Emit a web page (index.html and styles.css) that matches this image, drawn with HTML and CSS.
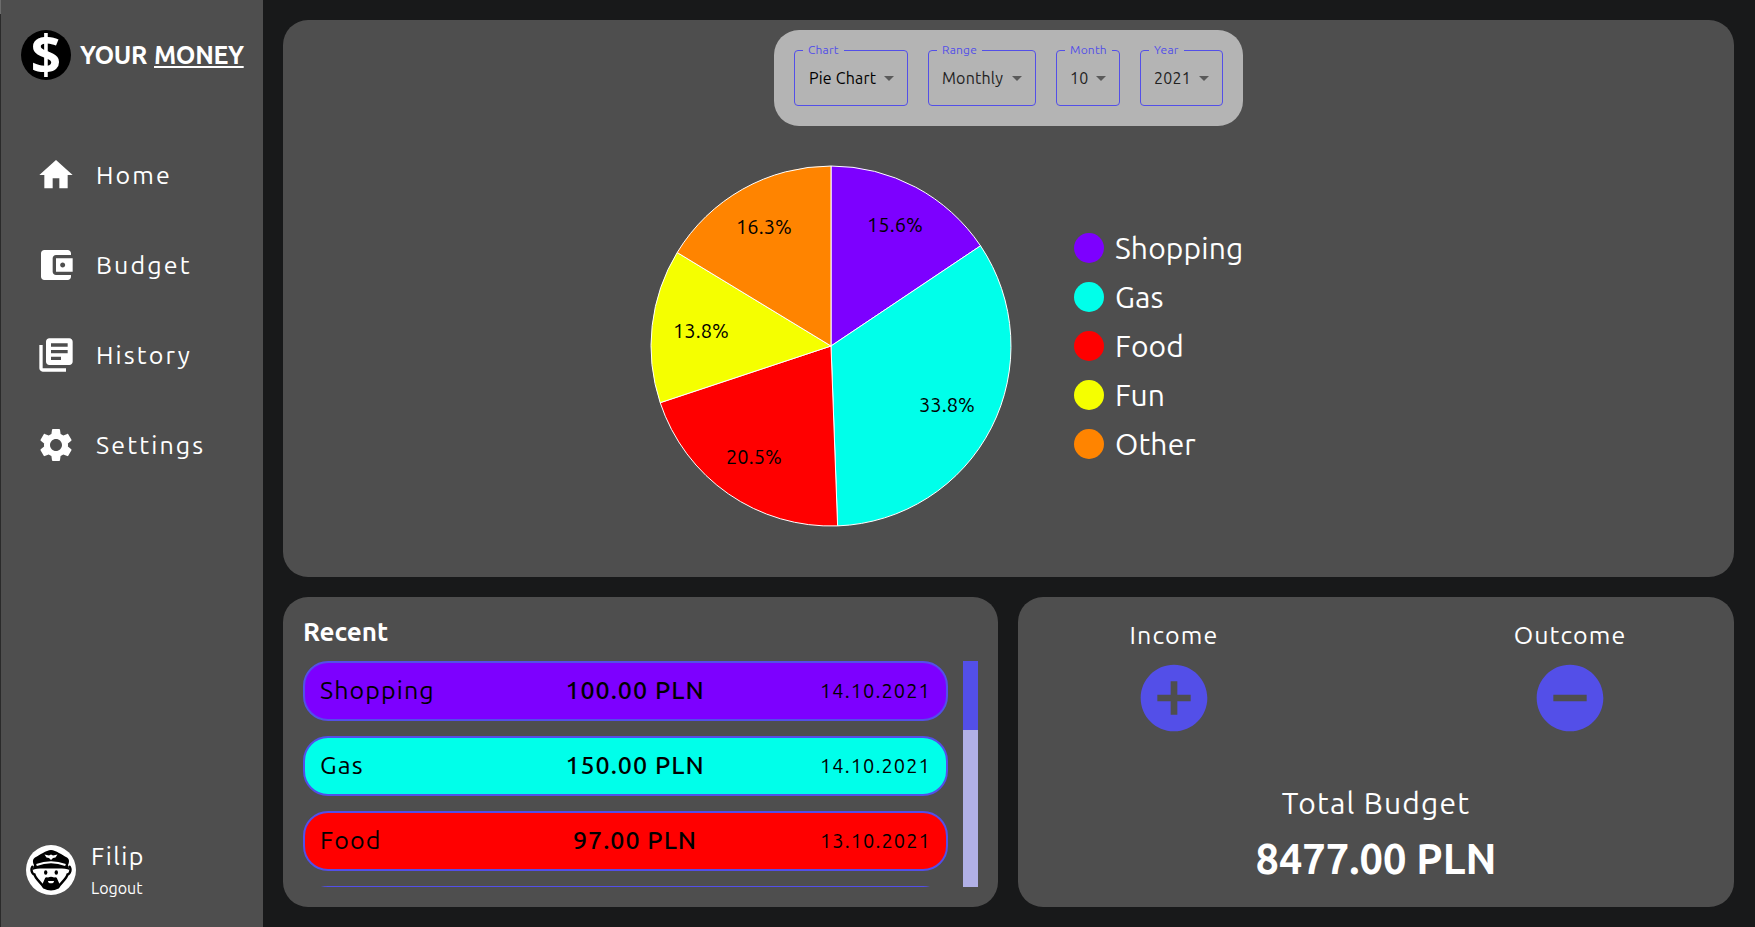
FILE: index.html
```
<!DOCTYPE html>
<html lang="en">
<head>
<meta charset="utf-8">
<title>Your Money</title>
<link rel="stylesheet" href="styles.css">
</head>
<body>
<div class="app">
  <aside class="sidebar">
    <header class="brand">
      <svg class="brand-logo" viewBox="0 0 50 50"><circle cx="25" cy="25" r="25"/><text x="25" y="43.500" text-anchor="middle">$</text></svg>
      <h1 class="brand-name">YOUR <span class="brand-underline">MONEY</span></h1>
    </header>
    <nav class="nav">
      <a class="nav-item"><svg class="nav-icon" viewBox="0 0 24 24"><path d="M10 20v-6h4v6h5v-8h3L12 3 2 12h3v8z"/></svg><span>Home</span></a>
      <a class="nav-item"><svg class="nav-icon" viewBox="0 0 24 24"><path d="M21 18v1c0 1.1-.9 2-2 2H5c-1.11 0-2-.9-2-2V5c0-1.1.89-2 2-2h14c1.1 0 2 .9 2 2v1h-9c-1.11 0-2 .9-2 2v8c0 1.1.89 2 2 2h9zm-9-2h10V8H12v8zm4-2.5c-.83 0-1.5-.67-1.5-1.5s.67-1.5 1.5-1.5 1.5.67 1.5 1.5-.67 1.5-1.5 1.5z"/></svg><span>Budget</span></a>
      <a class="nav-item"><svg class="nav-icon" viewBox="0 0 24 24"><path d="M4 6H2v14c0 1.1.9 2 2 2h14v-2H4V6zm16-4H8c-1.1 0-2 .9-2 2v12c0 1.1.9 2 2 2h12c1.1 0 2-.9 2-2V4c0-1.1-.9-2-2-2zm-1 9H9V9h10v2zm-4 4H9v-2h6v2zm4-8H9V5h10v2z"/></svg><span>History</span></a>
      <a class="nav-item"><svg class="nav-icon" viewBox="0 0 24 24"><path d="M19.14 12.94c.04-.3.06-.61.06-.94 0-.32-.02-.64-.07-.94l2.03-1.58c.18-.14.23-.41.12-.61l-1.92-3.32c-.12-.22-.37-.29-.59-.22l-2.39.96c-.5-.38-1.03-.7-1.62-.94l-.36-2.54c-.04-.24-.24-.41-.48-.41h-3.84c-.24 0-.43.17-.47.41l-.36 2.54c-.59.24-1.13.57-1.62.94l-2.39-.96c-.22-.08-.47 0-.59.22L2.74 8.87c-.12.21-.08.47.12.61l2.03 1.58c-.05.3-.09.63-.09.94s.02.64.07.94l-2.03 1.58c-.18.14-.23.41-.12.61l1.92 3.32c.12.22.37.29.59.22l2.39-.96c.5.38 1.03.7 1.62.94l.36 2.54c.05.24.24.41.48.41h3.84c.24 0 .44-.17.47-.41l.36-2.54c.59-.24 1.13-.56 1.62-.94l2.39.96c.22.08.47 0 .59-.22l1.92-3.32c.12-.22.07-.47-.12-.61l-2.01-1.58zM12 15.6c-1.98 0-3.6-1.62-3.6-3.6s1.62-3.6 3.6-3.6 3.6 1.62 3.6 3.6-1.62 3.6-3.6 3.6z"/></svg><span>Settings</span></a>
    </nav>
    <footer class="user">
      <svg class="avatar" viewBox="0 0 50 50">
        <circle cx="25" cy="25" r="25" fill="#fff"/>
        <path d="M7 21C4 24 6 29 8.500 29.500C9.500 34 14.500 37 18 42.500Q25 46 32 42.500C35.500 37 40.500 34 41.500 29.500C44 29 46 24 43 21" fill="#fff" stroke="#000" stroke-width="2.400"/>
        <path d="M25 5C20 5.200 14 10 9 12.500C6.500 14 6.500 17 8 20L6.500 25C10 23 17 23.500 25 23.500S40 23 43.500 25L42 20C43.500 17 43.500 14 41 12.500C36 10 30 5.200 25 5Z"/>
        <path d="M10.500 20Q25 14.500 39.500 20" fill="none" stroke="#fff" stroke-width="2"/>
        <path d="M18.500 9.500L23 10.500L25 9.500L27 10.500L31.500 9.500L29.500 12.500L27 13L25 15L23 13L20.500 12.500Z" fill="#fff"/>
        <ellipse cx="19.700" cy="27.500" rx="1.700" ry="2.300"/><ellipse cx="30.300" cy="27.500" rx="1.700" ry="2.300"/>
        <path d="M18.500 34.500Q19 31.500 22 32.500Q25 31 28 32.500Q31 31.500 31.500 34.500L33.500 39L31 43Q25 46.500 19 43L16.500 39Z"/>
        <path d="M22 36H28Q28 38.300 25 38.300T22 36Z" fill="#fff"/>
      </svg>
      <div class="user-text"><span class="user-name">Filip</span><a class="logout">Logout</a></div>
    </footer>
  </aside>

  <main class="main">
    <section class="card chart-card">
      <div class="filters">
        <div class="field field-chart"><span class="field-label">Chart</span><span>Pie Chart</span><svg class="arrow" viewBox="0 0 24 24"><path d="M7 10l5 5 5-5z"/></svg></div>
        <div class="field field-range"><span class="field-label">Range</span><span class="muted">Monthly</span><svg class="arrow" viewBox="0 0 24 24"><path d="M7 10l5 5 5-5z"/></svg></div>
        <div class="field field-month"><span class="field-label">Month</span><span class="muted">10</span><svg class="arrow" viewBox="0 0 24 24"><path d="M7 10l5 5 5-5z"/></svg></div>
        <div class="field field-year"><span class="field-label">Year</span><span class="muted">2021</span><svg class="arrow" viewBox="0 0 24 24"><path d="M7 10l5 5 5-5z"/></svg></div>
      </div>
      <div class="chart">
        <svg class="pie" viewBox="0 0 362 362">
          <g stroke="#fff" stroke-width="1" stroke-linejoin="round">
            <path fill="#7d00ff" d="M181 181V1A180 180 0 0 1 330.500 80.800Z"/>
            <path fill="#00ffea" d="M181 181L330.500 80.800A180 180 0 0 1 187.600 360.900Z"/>
            <path fill="#ff0000" d="M181 181L187.600 360.900A180 180 0 0 1 10.200 237.700Z"/>
            <path fill="#f5ff00" d="M181 181L10.200 237.700A180 180 0 0 1 27.200 87.500Z"/>
            <path fill="#ff8400" d="M181 181L27.200 87.500A180 180 0 0 1 181 1Z"/>
          </g>
          <g class="pie-labels">
            <text x="245" y="67">15.6%</text>
            <text x="297" y="247">33.8%</text>
            <text x="104" y="299">20.5%</text>
            <text x="51" y="173">13.8%</text>
            <text x="114" y="69">16.3%</text>
          </g>
        </svg>
        <ul class="legend">
          <li class="legend-item"><i class="dot shopping"></i>Shopping</li>
          <li class="legend-item"><i class="dot gas"></i>Gas</li>
          <li class="legend-item"><i class="dot food"></i>Food</li>
          <li class="legend-item"><i class="dot fun"></i>Fun</li>
          <li class="legend-item"><i class="dot other"></i>Other</li>
        </ul>
      </div>
    </section>

    <div class="bottom">
      <section class="card recent">
        <h2 class="recent-title">Recent</h2>
        <div class="scroller">
          <div class="rows">
            <div class="row shopping"><span>Shopping</span><b class="amount">100.00 PLN</b><span class="date">14.10.2021</span></div>
            <div class="row gas"><span>Gas</span><b class="amount">150.00 PLN</b><span class="date">14.10.2021</span></div>
            <div class="row food"><span>Food</span><b class="amount">97.00 PLN</b><span class="date">13.10.2021</span></div>
            <div class="row fun"></div>
          </div>
          <div class="track"><div class="thumb"></div></div>
        </div>
      </section>

      <section class="card budget">
        <div class="actions">
          <div class="action"><span>Income</span><svg class="action-icon" viewBox="0 0 24 24"><path d="M12 2C6.480 2 2 6.480 2 12s4.480 10 10 10 10-4.480 10-10S17.520 2 12 2zm5 11h-4v4h-2v-4H7v-2h4V7h2v4h4v2z"/></svg></div>
          <div class="action"><span>Outcome</span><svg class="action-icon" viewBox="0 0 24 24"><path d="M12 2C6.480 2 2 6.480 2 12s4.480 10 10 10 10-4.480 10-10S17.520 2 12 2zm5 11H7v-2h10v2z"/></svg></div>
        </div>
        <div class="total"><span class="total-label">Total Budget</span><strong class="total-value">8477.00 PLN</strong></div>
      </section>
    </div>
  </main>
</div>
</body>
</html>
```
FILE: styles.css
```
* { box-sizing: border-box; margin: 0; padding: 0; }
body { background: #18191a; color: #fff; font-family: Ubuntu, "Noto Sans", sans-serif; font-size: 25px; }
.app { display: flex; height: 927px; overflow: hidden; }

.sidebar { width: 263px; flex: none; display: flex; flex-direction: column; padding: 30px 0 31px; background: linear-gradient(#6c6c6c 14px, #2a2a2a 14px) 0 0 / 1px 100% no-repeat, #4e4e4e; }
.brand { display: flex; align-items: center; gap: 9px; padding-left: 21px; }
.brand-logo { width: 50px; height: 50px; flex: none; overflow: visible; }
.brand-logo text { font: 700 53px "Open Sans", sans-serif; fill: #fff; }
.brand-name { font-size: 25px; font-weight: 700; letter-spacing: -0.4px; word-spacing: 1.5px; white-space: nowrap; }
.brand-underline { text-decoration: underline; text-decoration-thickness: 2px; text-underline-offset: 2px; }
.nav { display: flex; flex-direction: column; gap: 50px; margin-top: 75px; padding-left: 36px; }
.nav-item { display: flex; align-items: center; gap: 20px; height: 40px; letter-spacing: 2.15px; }
.nav-icon { width: 40px; height: 40px; fill: #fff; }
.user { display: flex; align-items: center; gap: 15px; margin-top: auto; padding-left: 26px; }
.avatar { width: 50px; height: 50px; }
.user-text { display: flex; flex-direction: column; gap: 11px; line-height: 1; }
.user-name { letter-spacing: 1.5px; }
.logout { font-size: 16px; }

.main { flex: 1; display: flex; flex-direction: column; gap: 20px; padding: 20px 21px 20px 20px; }
.card { background: #4e4e4e; border-radius: 25px; }
.chart-card { height: 557px; display: flex; flex-direction: column; align-items: center; padding-top: 10px; }
.filters { display: flex; gap: 20px; height: 96px; padding: 20px; border-radius: 25px; background: #b4b4b4; }
.field { position: relative; display: flex; align-items: center; justify-content: space-between; height: 56px; padding: 0 6px 0 13px; border: 1px solid #534fe8; border-radius: 4px; font-size: 16px; letter-spacing: 0.2px; color: #000; }
.field-chart { width: 114px; padding-left: 14px; }
.field-range { width: 108px; }
.field-month { width: 64px; }
.field-year { width: 83px; }
.field-label { position: absolute; left: 8px; top: -8px; padding: 0 5px; background: #b4b4b4; color: #534fe8; font-size: 12px; line-height: 14px; }
.muted { color: #222; }
.arrow { width: 24px; height: 24px; fill: #5a5a5a; }
.chart { align-self: flex-start; display: flex; align-items: center; margin: 39px 0 0 367px; }
.pie { width: 362px; height: 362px; }
.pie-labels { font-size: 20px; letter-spacing: 0.1px; text-anchor: middle; fill: #000; }
.legend { list-style: none; display: flex; flex-direction: column; gap: 15px; margin-left: 62px; font-size: 30px; letter-spacing: 0.15px; }
.legend-item { display: flex; align-items: center; gap: 11px; height: 34px; }
.dot { width: 30px; height: 30px; border-radius: 50%; }
.shopping { background: #7d00ff; }
.gas { background: #00ffea; }
.food { background: #ff0000; }
.fun { background: #f5ff00; }
.other { background: #ff8400; }

.bottom { display: flex; gap: 20px; height: 310px; }
.recent { width: 715px; padding: 20px; }
.recent-title { font-size: 26px; line-height: 30px; letter-spacing: 0; margin-bottom: 14px; }
.scroller { display: flex; gap: 15px; height: 226px; overflow: hidden; }
.rows { flex: 1; }
.row { display: grid; grid-template-columns: 240px 150px 1fr; align-items: center; height: 60px; margin-bottom: 15px; padding: 0 15px 2px; border: 2px solid #534fe8; border-radius: 25px; color: #000; letter-spacing: 1.1px; }
.amount { font-weight: 500; text-align: center; letter-spacing: 1px; }
.date { font-size: 20px; text-align: right; }
.track { width: 15px; background: #b1b0e6; }
.thumb { height: 69px; background: #534fe8; }

.budget { width: 716px; display: flex; flex-direction: column; justify-content: space-between; padding: 24px 0 25px; letter-spacing: 1.1px; }
.actions { display: flex; justify-content: space-between; padding: 0 108px 0 100px; }
.action { width: 112px; display: flex; flex-direction: column; align-items: center; gap: 8px; line-height: 29px; }
.action-icon { width: 80px; height: 80px; fill: #534fe8; }
.total { display: flex; flex-direction: column; align-items: center; gap: 15px; }
.total-label { font-size: 30px; line-height: 35px; letter-spacing: 1.2px; }
.total-value { font-size: 41.6px; line-height: 46px; letter-spacing: 0; }
```
